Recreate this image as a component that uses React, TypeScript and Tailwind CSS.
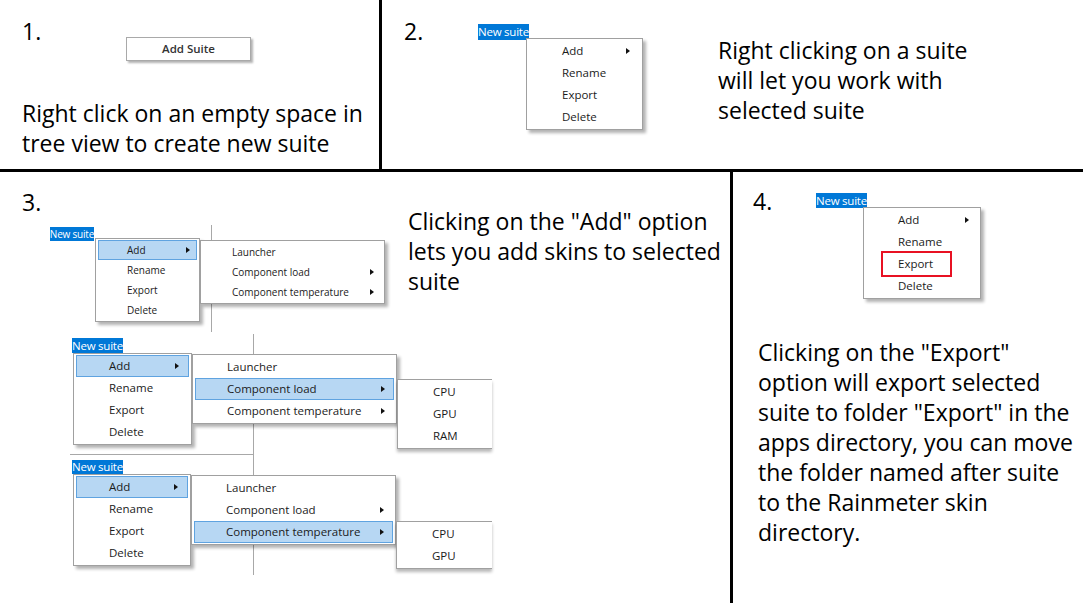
import clsx from "clsx";

type Item = { label: string; sub?: boolean; mark?: boolean };

interface MenuProps {
  items: Item[];
  active?: number;
  w: string;
  row: string;
  size: string;
  pad: string;
  arr: string;
  cut?: boolean;
  className?: string;
}

function Arrow({ className }: { className?: string }) {
  return (
    <span
      className={clsx(
        "ml-auto w-0 h-0 border-y-[3.5px] border-y-transparent border-l-[4px] border-l-[#111]",
        className
      )}
    />
  );
}

function Menu({ items, active, w, row, size, pad, arr, cut, className }: MenuProps) {
  return (
    <div
      className={clsx(
        "relative shrink-0 bg-white border border-[#a0a0a0] px-[2px] py-[1px] text-[#1b1b1b]",
        cut ? "border-r-0 shadow-[0_3px_3px_rgba(0,0,0,0.28)]" : "shadow-[3px_3px_3px_rgba(0,0,0,0.3)]",
        w,
        size,
        className
      )}
    >
      {items.map((it, i) => (
        <div
          key={it.label}
          className={clsx(
            "relative flex items-center border whitespace-nowrap",
            row,
            i === active ? "bg-[#b7d7f3] border-[#5fa3e0]" : "border-transparent"
          )}
        >
          <span className={pad}>{it.label}</span>
          {it.sub && <Arrow className={arr} />}
          {it.mark && (
            <span className="absolute left-[14px] top-[-3px] w-[71px] h-[26px] border-2 border-[#e81123]" />
          )}
        </div>
      ))}
    </div>
  );
}

function Suite({ className }: { className: string }) {
  return (
    <div
      className={clsx(
        "bg-[#0078d7] text-white flex items-center justify-center whitespace-nowrap tracking-[-0.02em]",
        className
      )}
    >
      New suite
    </div>
  );
}

function Num({ children, className }: { children: string; className: string }) {
  return <div className={clsx("shrink-0 h-[30px]", className)}>{children}</div>;
}

const mainItems: Item[] = [
  { label: "Add", sub: true },
  { label: "Rename" },
  { label: "Export" },
  { label: "Delete" },
];

const addItems: Item[] = [
  { label: "Launcher" },
  { label: "Component load", sub: true },
  { label: "Component temperature", sub: true },
];

export default function App() {
  return (
    <div className="w-[1083px] h-[603px] bg-white text-black flex flex-col overflow-hidden font-['Open_Sans',sans-serif] text-[23px] leading-[30px]">
      <div className="flex h-[169px] shrink-0">
        {/* 1 */}
        <div className="w-[379px] shrink-0 pl-[22px] pt-[16px]">
          <div className="flex">
            <Num className="w-[104px]">1.</Num>
            <div className="mt-[21px] w-[125px] h-[24px] border border-[#a9a9a9] bg-white shadow-[2px_2px_2px_rgba(0,0,0,0.3)] flex items-center justify-center text-[11.5px] font-semibold text-[#333] leading-none">
              Add Suite
            </div>
          </div>
          <p className="mt-[37px] whitespace-nowrap">
            Right click on an empty space in
            <br />
            tree view to create new suite
          </p>
        </div>
        <div className="w-[3px] bg-black shrink-0" />
        {/* 2 */}
        <div className="flex-1 flex pl-[22px] pt-[16px]">
          <Num className="w-[74px]">2.</Num>
          <div className="w-[240px] shrink-0 mt-[8px]">
            <Suite className="w-[51px] h-[16px] text-[11.5px]" />
            <Menu
              items={mainItems}
              w="w-[117px]"
              row="h-[22px]"
              size="text-[11.5px]"
              pad="pl-[32px]"
              arr="mr-[9px]"
              className="ml-[48px] mt-[-2px]"
            />
          </div>
          <p className="mt-[19px] whitespace-nowrap">
            Right clicking on a suite
            <br />
            will let you work with
            <br />
            selected suite
          </p>
        </div>
      </div>
      <div className="h-[3px] bg-black shrink-0" />
      <div className="flex flex-1">
        {/* 3 */}
        <div className="relative w-[730px] shrink-0 flex pl-[22px] pt-[15px]">
          <div className="absolute left-[211px] top-[53px] h-[107px] w-px bg-[#a8a8a8]" />
          <div className="absolute left-[253px] top-[162px] h-[241px] w-px bg-[#a8a8a8]" />
          <div className="absolute left-[70px] top-[282px] h-px w-[183px] bg-[#a8a8a8]" />
          <div className="w-[386px] shrink-0">
            <Num className="">3.</Num>
            <div className="mt-[10px] ml-[28px]">
              <Suite className="w-[44px] h-[14px] text-[10px]" />
              <div className="flex items-start">
                <Menu
                  items={mainItems}
                  active={0}
                  w="w-[105px]"
                  row="h-[20px]"
                  size="text-[10px]"
                  pad="pl-[28px]"
                  arr="mr-[6px]"
                  className="ml-[45px] mt-[-3px] py-0"
                />
                <Menu
                  items={addItems}
                  w="w-[185px]"
                  row="h-[20px]"
                  size="text-[10px]"
                  pad="pl-[28px]"
                  arr="mr-[7px]"
                  className="mt-[-1px] py-0"
                />
              </div>
            </div>
            <div className="mt-[16px] ml-[50px]">
              <Suite className="w-[51px] h-[15px] text-[11.5px]" />
              <div className="flex items-start">
                <Menu
                  items={mainItems}
                  active={0}
                  w="w-[119px]"
                  row="h-[22px]"
                  size="text-[11.5px]"
                  pad="pl-[32px]"
                  arr="mr-[9px]"
                  className="ml-[1px]"
                />
                <Menu
                  items={addItems}
                  active={1}
                  w="w-[205px]"
                  row="h-[22px]"
                  size="text-[11.5px]"
                  pad="pl-[31px]"
                  arr="mr-[8px]"
                  className="mt-[1px]"
                />
                <Menu
                  items={[{ label: "CPU" }, { label: "GPU" }, { label: "RAM" }]}
                  w="w-[95px]"
                  row="h-[22px]"
                  size="text-[11.5px]"
                  pad="pl-[32px]"
                  arr=""
                  cut
                  className="mt-[26px]"
                />
              </div>
            </div>
            <div className="mt-[11px] ml-[50px]">
              <Suite className="w-[51px] h-[14px] text-[11.5px]" />
              <div className="flex items-start">
                <Menu
                  items={mainItems}
                  active={0}
                  w="w-[118px]"
                  row="h-[22px]"
                  size="text-[11.5px]"
                  pad="pl-[32px]"
                  arr="mr-[9px]"
                  className="ml-[1px]"
                />
                <Menu
                  items={addItems}
                  active={2}
                  w="w-[205px]"
                  row="h-[22px]"
                  size="text-[11.5px]"
                  pad="pl-[31px]"
                  arr="mr-[8px]"
                  className="mt-[1px]"
                />
                <Menu
                  items={[{ label: "CPU" }, { label: "GPU" }]}
                  w="w-[96px]"
                  row="h-[22px]"
                  size="text-[11.5px]"
                  pad="pl-[32px]"
                  arr=""
                  cut
                  className="mt-[47px]"
                />
              </div>
            </div>
          </div>
          <p className="mt-[19px] whitespace-nowrap">
            Clicking on the "Add" option
            <br />
            lets you add skins to selected
            <br />
            suite
          </p>
        </div>
        <div className="w-[3px] bg-black shrink-0" />
        {/* 4 */}
        <div className="flex-1 pl-[20px] pt-[14px]">
          <div className="flex">
            <Num className="w-[63px]">4.</Num>
            <div className="mt-[7px]">
              <Suite className="w-[51px] h-[15px] text-[11.5px]" />
              <Menu
                items={[
                  { label: "Add", sub: true },
                  { label: "Rename" },
                  { label: "Export", mark: true },
                  { label: "Delete" },
                ]}
                w="w-[118px]"
                row="h-[22px]"
                size="text-[11.5px]"
                pad="pl-[31px]"
                arr="mr-[8px]"
                className="ml-[47px] mt-[-1px]"
              />
            </div>
          </div>
          <p className="mt-[38px] ml-[5px] whitespace-nowrap">
            Clicking on the "Export"
            <br />
            option will export selected
            <br />
            suite to folder "Export" in the
            <br />
            apps directory, you can move
            <br />
            the folder named after suite
            <br />
            to the Rainmeter skin
            <br />
            directory.
          </p>
        </div>
      </div>
    </div>
  );
}
